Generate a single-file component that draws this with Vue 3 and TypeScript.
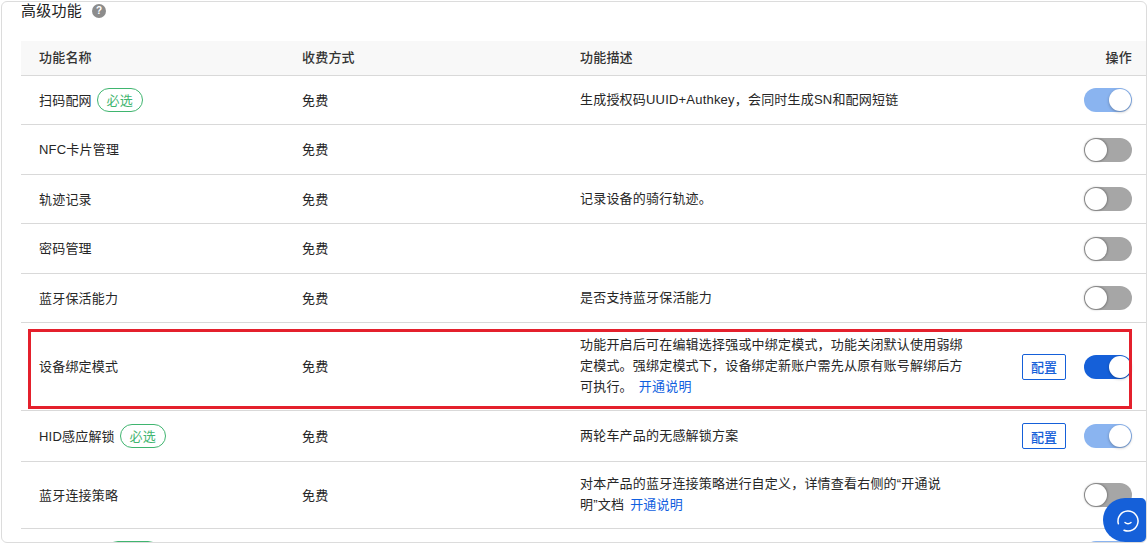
<script setup lang="ts">
interface Row {
  name: string
  required?: boolean
  desc?: string
  link?: string
  config?: boolean
  state: 'off' | 'on' | 'locked'
  height: number
}
const rows: Row[] = [
  { name: '扫码配网', required: true, desc: '生成授权码UUID+Authkey，会同时生成SN和配网短链', state: 'locked', height: 49 },
  { name: 'NFC卡片管理', state: 'off', height: 50 },
  { name: '轨迹记录', desc: '记录设备的骑行轨迹。', state: 'off', height: 49 },
  { name: '密码管理', state: 'off', height: 50 },
  { name: '蓝牙保活能力', desc: '是否支持蓝牙保活能力', state: 'off', height: 49 },
  { name: '设备绑定模式', desc: '功能开启后可在编辑选择强或中绑定模式，功能关闭默认使用弱绑定模式。强绑定模式下，设备绑定新账户需先从原有账号解绑后方可执行。', link: '开通说明', config: true, state: 'on', height: 88 },
  { name: 'HID感应解锁', required: true, desc: '两轮车产品的无感解锁方案', config: true, state: 'locked', height: 51 },
  { name: '蓝牙连接策略', desc: '对本产品的蓝牙连接策略进行自定义，详情查看右侧的“开通说明”文档', link: '开通说明', state: 'off', height: 67 },
]
</script>

<template>
  <div class="page">
    <section class="card">
      <h2 class="title">高级功能<span class="help">?</span></h2>
      <div class="table">
        <div class="row head">
          <div>功能名称</div>
          <div>收费方式</div>
          <div>功能描述</div>
          <div class="action">操作</div>
        </div>
        <div v-for="r in rows" :key="r.name" class="row" :style="{ height: r.height + 'px' }">
          <div class="name">{{ r.name }}<span v-if="r.required" class="tag">必选</span></div>
          <div>免费</div>
          <div class="desc">{{ r.desc }}<a v-if="r.link" class="link">{{ r.link }}</a></div>
          <div class="action">
            <button v-if="r.config" class="config">配置</button>
            <span class="switch" :class="r.state"><i></i></span>
          </div>
        </div>
        <div class="row peek">
          <div class="name"><span class="tag ghost"></span></div>
          <div></div>
          <div></div>
          <div class="action"><span class="switch locked"></span></div>
        </div>
        <div class="mark"></div>
      </div>
    </section>
    <button class="chat" aria-label="客服">
      <svg width="26" height="26" viewBox="0 0 26 26" fill="none" stroke="#fff" stroke-width="1.5" stroke-linecap="round">
        <path d="M3.4 15.8A10 10 0 1 1 9 22.2" />
        <path d="M10 14.5c1.6 1.6 4.4 1.6 6 0" />
      </svg>
    </button>
  </div>
</template>

<style scoped>
.page {
  position: relative;
  width: 1148px;
  height: 544px;
  overflow: hidden;
  background: #fff;
  font-family: "Liberation Sans", "Noto Sans CJK SC", sans-serif;
  color: #262626;
}
.card {
  box-sizing: border-box;
  margin: 1px 0 0 1px;
  width: 1146px;
  height: 542px;
  padding: 0 0 0 19px;
  border: 1px solid #dcdcdc;
  border-radius: 6px;
  overflow: hidden;
}
.title {
  display: flex;
  align-items: center;
  box-sizing: border-box;
  height: 18px;
  margin: 0;
  padding-bottom: 4px;
  font-size: 15px;
  font-weight: 400;
  letter-spacing: 0.25px;
  color: #222;
}
.help {
  display: inline-block;
  width: 14px;
  height: 14px;
  margin: 4px 0 0 10px;
  border-radius: 50%;
  background: #8c8c8c;
  color: #fff;
  font-size: 10px;
  font-weight: 700;
  line-height: 14px;
  text-align: center;
  letter-spacing: 0;
}
.table {
  position: relative;
  margin-top: 21px;
  font-size: 13px;
  letter-spacing: 0.2px;
}
.row {
  display: grid;
  grid-template-columns: 263px 278px 386px 1fr;
  align-items: center;
  box-sizing: border-box;
  padding-left: 18px;
  border-bottom: 1px solid #d9d9d9;
}
.row > div:not(.action) { padding-bottom: 2px; }
.head {
  height: 35px;
  background: #f8f8f8;
  color: #333;
  font-weight: 500;
}
.head > div { padding-bottom: 4px !important; }
.name { display: flex; align-items: center; }
.tag {
  display: inline-flex;
  align-items: center;
  justify-content: center;
  box-sizing: border-box;
  width: 46px;
  height: 24px;
  margin: 2px 0 0 5px;
  padding-bottom: 1px;
  border: 1px solid #3fb56f;
  border-radius: 12px;
  color: #3fb56f;
  font-size: 13px;
}
.desc { line-height: 21px; }
.link { margin-left: 6px; color: #1060e0; }
.action {
  display: flex;
  align-items: center;
  justify-content: flex-end;
  padding-right: 14px;
}
.config {
  box-sizing: border-box;
  width: 44px;
  height: 26px;
  margin-right: 18px;
  padding: 0;
  border: 1px solid #1560d9;
  border-radius: 2px;
  background: #fff;
  color: #1560d9;
  font: inherit;
  font-weight: 500;
}
.switch {
  position: relative;
  display: block;
  flex: none;
  width: 48px;
  height: 24px;
  border-radius: 12px;
}
.switch i {
  position: absolute;
  top: 1px;
  width: 22px;
  height: 22px;
  border-radius: 50%;
  background: #fff;
  box-shadow: 0 1px 3px rgba(0, 0, 0, 0.3);
}
.off { background: #a6a6a6; }
.off i { left: 1px; box-shadow: 0 0 2px 1px rgba(0, 0, 0, 0.25); }
.on { background: #1560d9; }
.on i { right: 1px; }
.locked { background: #8ab4f0; }
.locked i { right: 1px; }
.peek { height: 40px; border: 0; align-items: start; padding-top: 12px; }
.ghost { width: 54px; margin: 0 0 0 67px; }
.mark {
  position: absolute;
  top: 288px;
  left: 7px;
  width: 1104px;
  height: 80px;
  box-sizing: border-box;
  border: 3px solid #e4202c;
  pointer-events: none;
}
.chat {
  position: absolute;
  right: 2px;
  bottom: 2px;
  display: flex;
  align-items: center;
  justify-content: center;
  box-sizing: border-box;
  width: 43px;
  height: 44px;
  padding: 2px 0 0 7px;
  border: 0;
  border-radius: 22px 5px 5px 22px;
  background: #1560d9;
}
</style>
